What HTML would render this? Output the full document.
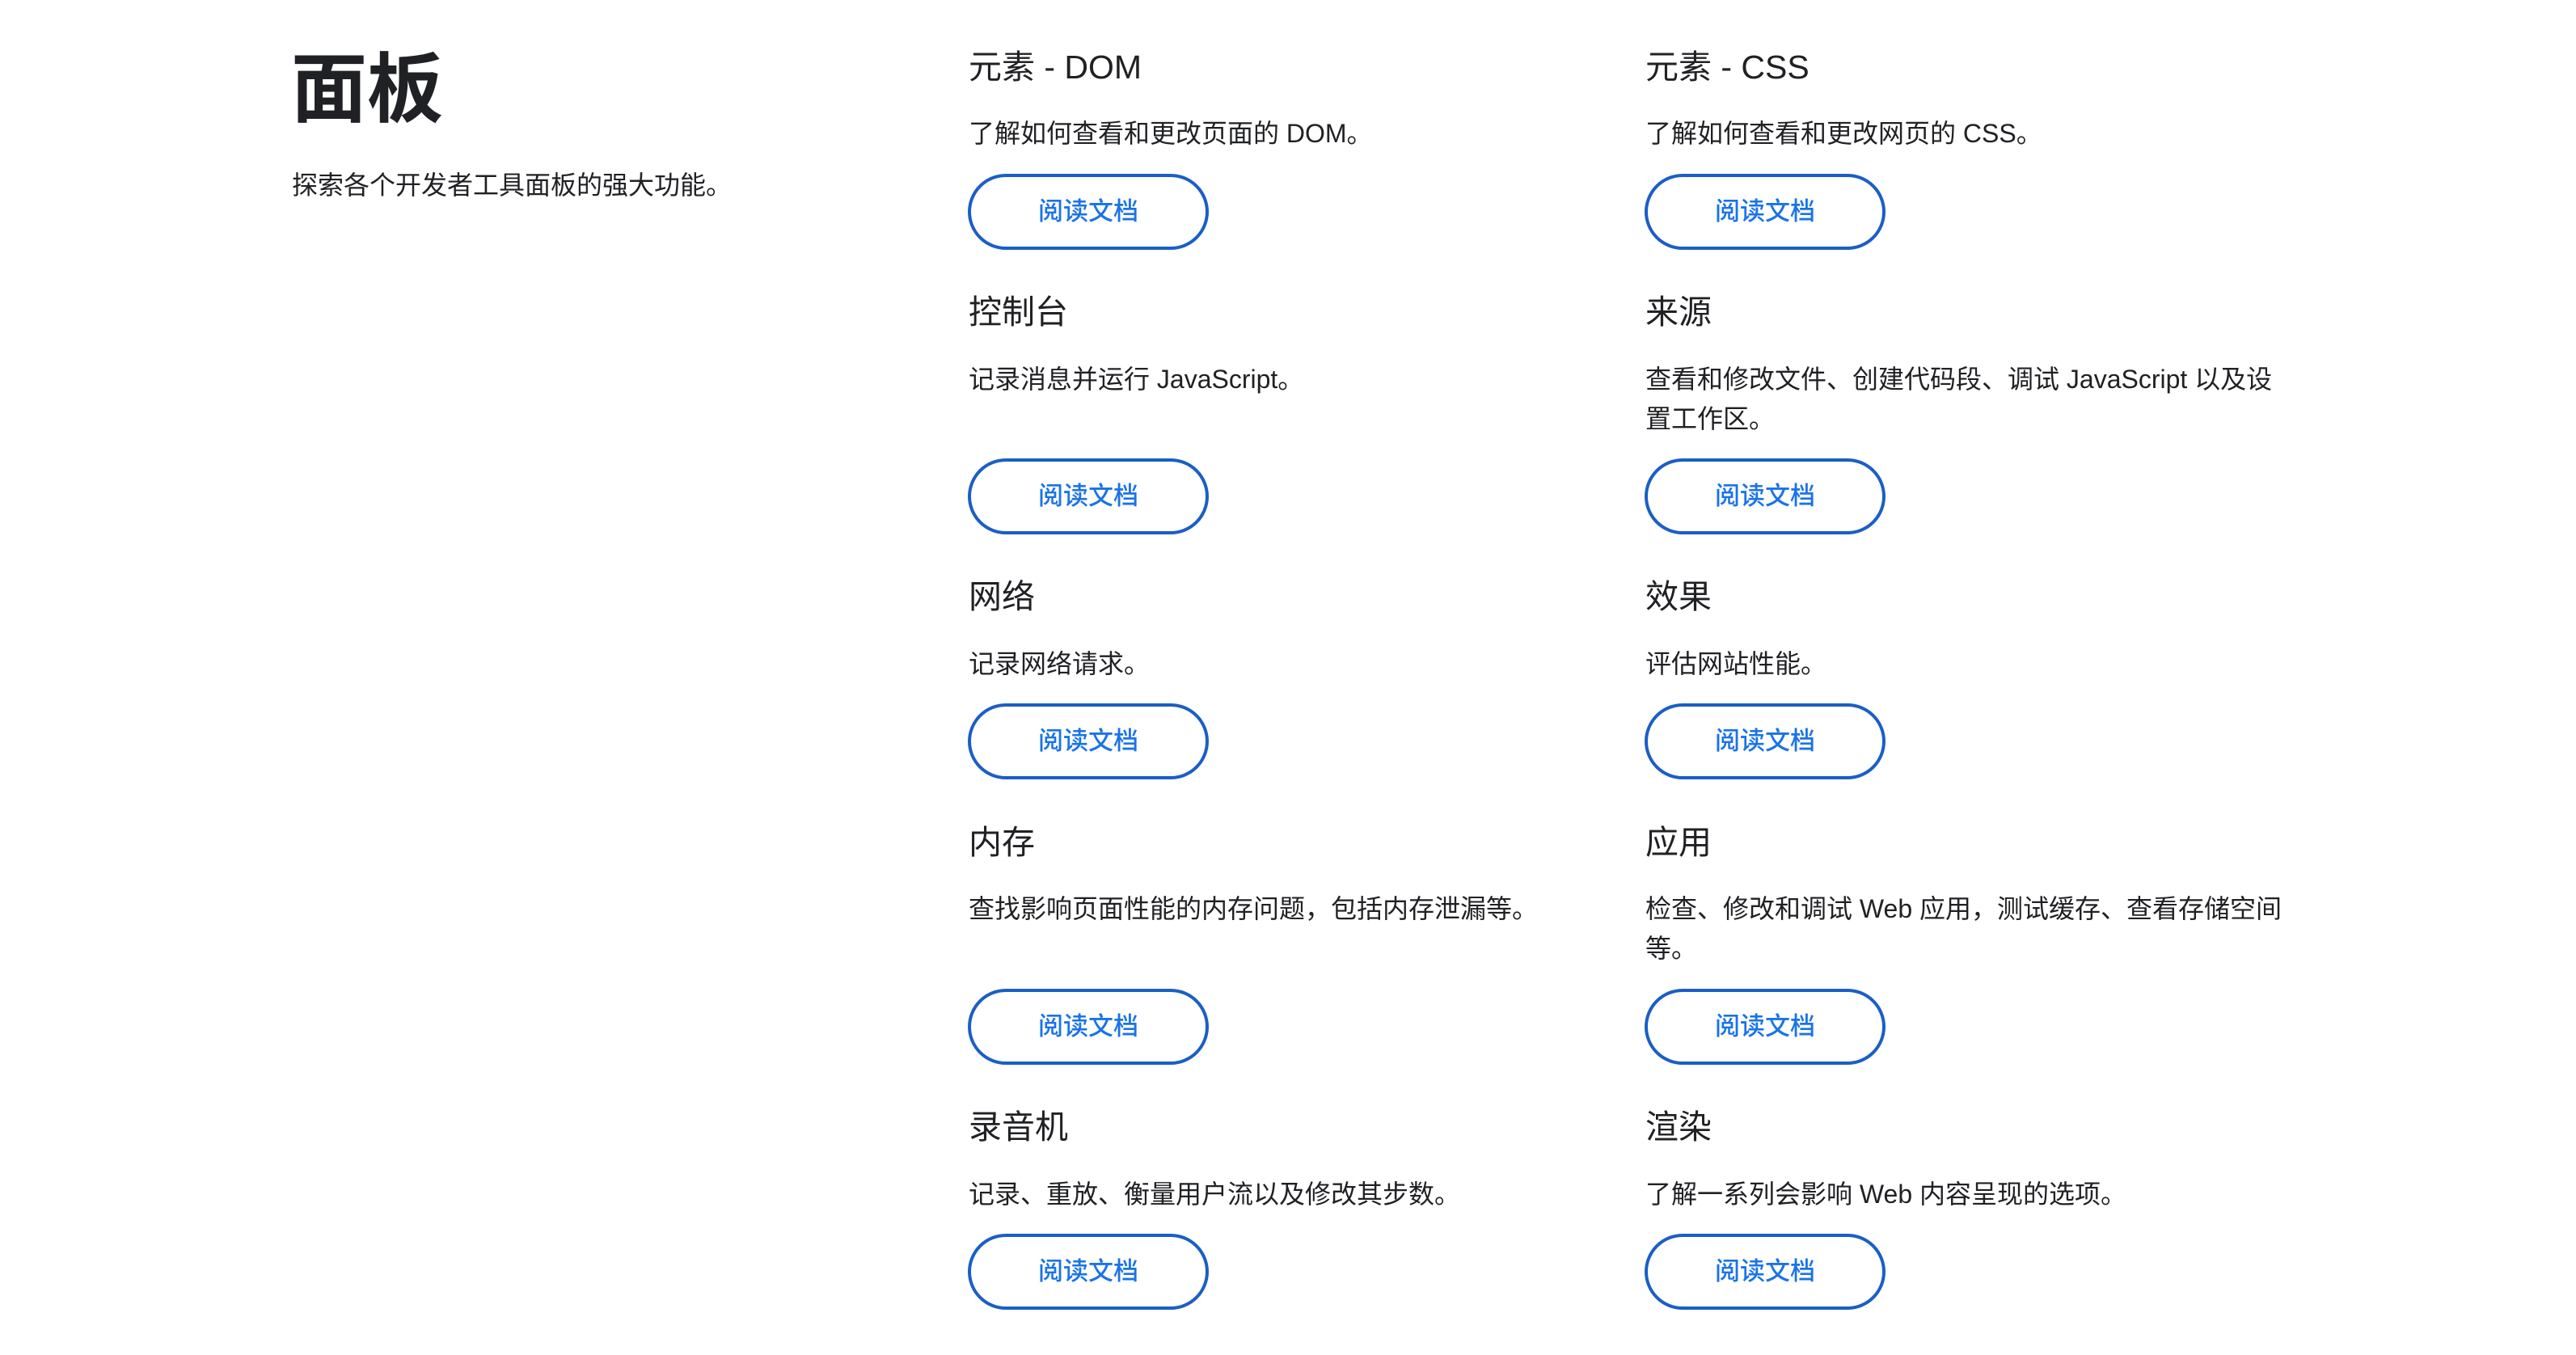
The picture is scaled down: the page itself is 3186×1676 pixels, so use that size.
<!DOCTYPE html>
<html><head><meta charset="utf-8"><style>
html,body{margin:0;padding:0;background:#fff;}
body{width:3186px;height:1676px;position:relative;overflow:hidden;font-family:"Liberation Sans","Noto Sans CJK SC",sans-serif;color:#202124;}
.a{position:absolute;white-space:nowrap;}
.t{left:360px;top:51px;font-size:94px;font-weight:bold;line-height:120px;}
.s{left:361px;top:205px;font-size:32px;line-height:48px;}
.h{font-size:41px;line-height:60px;}
.d{font-size:32px;line-height:49px;}
.b{width:290px;height:86px;border:4px solid #1b5ec6;border-radius:48px;color:#1a73e8;font-size:31px;line-height:86px;text-align:center;font-weight:500;}
</style></head><body>
<div class="a t">面板</div>
<div class="a s">探索各个开发者工具面板的强大功能。</div>

<div class="a h" style="left:1198px;top:53px">元素 - DOM</div>
<div class="a d" style="left:1198px;top:141px">了解如何查看和更改页面的 DOM。</div>
<div class="a b" style="left:1197px;top:215px">阅读文档</div>

<div class="a h" style="left:2035px;top:53px">元素 - CSS</div>
<div class="a d" style="left:2035px;top:141px">了解如何查看和更改网页的 CSS。</div>
<div class="a b" style="left:2034px;top:215px">阅读文档</div>

<div class="a h" style="left:1198px;top:356px">控制台</div>
<div class="a d" style="left:1198px;top:445px">记录消息并运行 JavaScript。</div>
<div class="a b" style="left:1197px;top:567px">阅读文档</div>

<div class="a h" style="left:2035px;top:356px">来源</div>
<div class="a d" style="left:2035px;top:445px">查看和修改文件、创建代码段、调试 JavaScript 以及设<br>置工作区。</div>
<div class="a b" style="left:2034px;top:567px">阅读文档</div>

<div class="a h" style="left:1198px;top:708px">网络</div>
<div class="a d" style="left:1198px;top:797px">记录网络请求。</div>
<div class="a b" style="left:1197px;top:870px">阅读文档</div>

<div class="a h" style="left:2035px;top:708px">效果</div>
<div class="a d" style="left:2035px;top:797px">评估网站性能。</div>
<div class="a b" style="left:2034px;top:870px">阅读文档</div>

<div class="a h" style="left:1198px;top:1012px">内存</div>
<div class="a d" style="left:1198px;top:1100px">查找影响页面性能的内存问题，包括内存泄漏等。</div>
<div class="a b" style="left:1197px;top:1223px">阅读文档</div>

<div class="a h" style="left:2035px;top:1012px">应用</div>
<div class="a d" style="left:2035px;top:1100px">检查、修改和调试 Web 应用，测试缓存、查看存储空间<br>等。</div>
<div class="a b" style="left:2034px;top:1223px">阅读文档</div>

<div class="a h" style="left:1198px;top:1364px">录音机</div>
<div class="a d" style="left:1198px;top:1453px">记录、重放、衡量用户流以及修改其步数。</div>
<div class="a b" style="left:1197px;top:1526px">阅读文档</div>

<div class="a h" style="left:2035px;top:1364px">渲染</div>
<div class="a d" style="left:2035px;top:1453px">了解一系列会影响 Web 内容呈现的选项。</div>
<div class="a b" style="left:2034px;top:1526px">阅读文档</div>
</body></html>
